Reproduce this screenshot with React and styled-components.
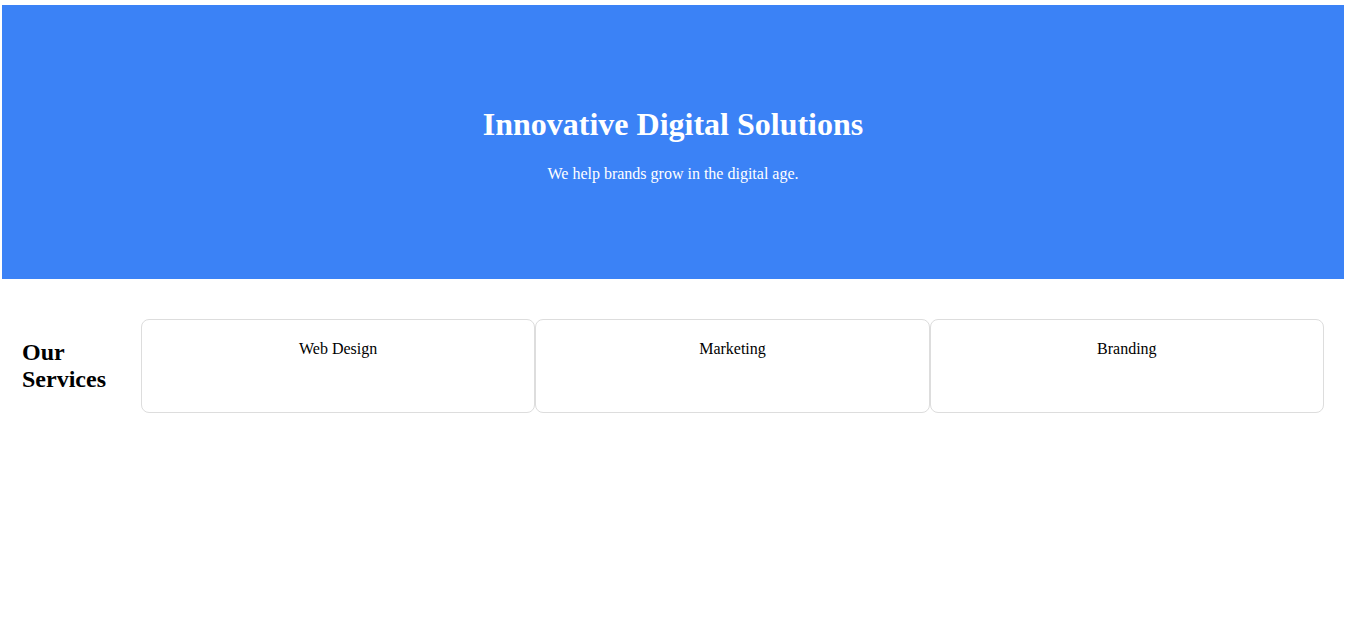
import React from 'react';
import styled, { createGlobalStyle } from 'styled-components';

const GlobalStyle = createGlobalStyle`
  body {
    margin: 0;
    font-family: "Liberation Serif", "Times New Roman", serif;
    background: #fff;
  }
`;

const services = ['Web Design', 'Marketing', 'Branding'];

const App = () => (
  <Page>
    <GlobalStyle />
    <Hero>
      <HeroTitle>Innovative Digital Solutions</HeroTitle>
      <HeroText>We help brands grow in the digital age.</HeroText>
    </Hero>
    <Services>
      <ServicesTitle>Our Services</ServicesTitle>
      <CardRow>
        {services.map((name) => (
          <Card key={name}>{name}</Card>
        ))}
      </CardRow>
    </Services>
  </Page>
);

const Page = styled.div`
  padding: 5px 1px 0 2px;
`;

const Hero = styled.header`
  background-color: #3b82f6;
  color: #fff;
  text-align: center;
  padding: 80px 20px;
`;

const HeroTitle = styled.h1`
  font-size: 32px;
  margin: 21.44px 0;
`;

const HeroText = styled.p`
  font-size: 16px;
  margin: 16px 0;
`;

const Services = styled.section`
  display: flex;
  align-items: flex-start;
  padding: 40px 20px;
`;

const ServicesTitle = styled.h2`
  width: 119px;
  flex-shrink: 0;
  font-size: 24px;
  margin: 19.92px 0;
`;

const CardRow = styled.div`
  flex: 1;
  display: grid;
  grid-template-columns: repeat(3, 1fr);
`;

const Card = styled.div`
  box-sizing: border-box;
  height: 94px;
  padding-top: 20px;
  border: 1px solid #ddd;
  border-radius: 8px;
  text-align: center;
  font-size: 16px;
`;

export default App;
